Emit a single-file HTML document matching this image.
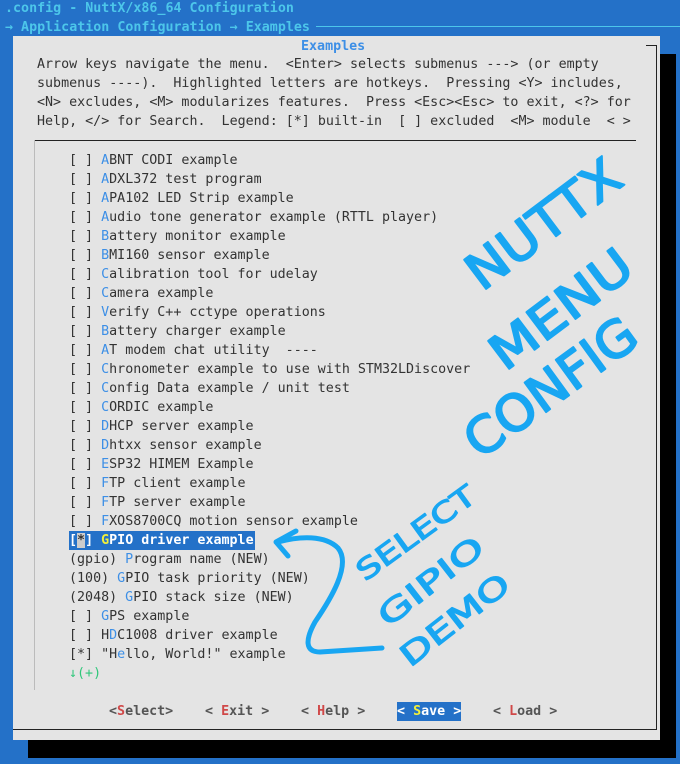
<!DOCTYPE html>
<html><head><meta charset="utf-8"><style>
*{margin:0;padding:0}
body{width:680px;height:764px;background:#2471c8;position:relative;overflow:hidden;font-family:"DejaVu Sans Mono","Liberation Mono",monospace;font-size:13.33px}
.r{position:absolute;white-space:pre;height:19px;line-height:19px;color:#333}
.h{color:#3d8fe6}
.t{color:#4cc6ea;font-weight:bold}
.k{color:#d04848}
.b{color:#555;font-weight:bold}
</style></head><body>
<div class="r t" style="left:5px;top:-1px">.config - NuttX/x86_64 Configuration</div>
<div class="r t" style="left:5px;top:18px">→ Application Configuration → Examples</div>
<div style="position:absolute;left:316px;top:26px;width:364px;height:1px;background:#4cc6ea"></div>
<div style="position:absolute;left:660px;top:54px;width:16px;height:704px;background:#000"></div>
<div style="position:absolute;left:28px;top:740px;width:648px;height:18px;background:#000"></div>
<div style="position:absolute;left:13px;top:36px;width:647px;height:704px;background:#e4e4e4"></div>
<div style="position:absolute;left:656px;top:45px;width:1px;height:685px;background:#222"></div>
<div style="position:absolute;left:13px;top:729px;width:644px;height:1px;background:#222"></div>
<div style="position:absolute;left:646px;top:45px;width:10px;height:1px;background:#222"></div>
<div style="position:absolute;left:34px;top:140px;width:602px;height:1px;background:#222"></div>
<div style="position:absolute;left:34px;top:140px;width:1px;height:550px;background:#bbb"></div>
<div class="r h" style="left:301px;top:37px;font-weight:bold">Examples</div>
<div class="r" style="left:37px;top:55px">Arrow keys navigate the menu.  &lt;Enter&gt; selects submenus ---&gt; (or empty</div>
<div class="r" style="left:37px;top:74px">submenus ----).  Highlighted letters are hotkeys.  Pressing &lt;Y&gt; includes,</div>
<div class="r" style="left:37px;top:93px">&lt;N&gt; excludes, &lt;M&gt; modularizes features.  Press &lt;Esc&gt;&lt;Esc&gt; to exit, &lt;?&gt; for</div>
<div class="r" style="left:37px;top:112px">Help, &lt;/&gt; for Search.  Legend: [*] built-in  [ ] excluded  &lt;M&gt; module  &lt; &gt;</div>

<div class="r" style="left:69px;top:151px">[ ] <span class="h">A</span>BNT CODI example</div>
<div class="r" style="left:69px;top:170px">[ ] <span class="h">A</span>DXL372 test program</div>
<div class="r" style="left:69px;top:189px">[ ] <span class="h">A</span>PA102 LED Strip example</div>
<div class="r" style="left:69px;top:208px">[ ] <span class="h">A</span>udio tone generator example (RTTL player)</div>
<div class="r" style="left:69px;top:227px">[ ] <span class="h">B</span>attery monitor example</div>
<div class="r" style="left:69px;top:246px">[ ] <span class="h">B</span>MI160 sensor example</div>
<div class="r" style="left:69px;top:265px">[ ] <span class="h">C</span>alibration tool for udelay</div>
<div class="r" style="left:69px;top:284px">[ ] <span class="h">C</span>amera example</div>
<div class="r" style="left:69px;top:303px">[ ] <span class="h">V</span>erify C++ cctype operations</div>
<div class="r" style="left:69px;top:322px">[ ] <span class="h">B</span>attery charger example</div>
<div class="r" style="left:69px;top:341px">[ ] <span class="h">A</span>T modem chat utility  ----</div>
<div class="r" style="left:69px;top:360px">[ ] <span class="h">C</span>hronometer example to use with STM32LDiscover</div>
<div class="r" style="left:69px;top:379px">[ ] <span class="h">C</span>onfig Data example / unit test</div>
<div class="r" style="left:69px;top:398px">[ ] <span class="h">C</span>ORDIC example</div>
<div class="r" style="left:69px;top:417px">[ ] <span class="h">D</span>HCP server example</div>
<div class="r" style="left:69px;top:436px">[ ] <span class="h">D</span>htxx sensor example</div>
<div class="r" style="left:69px;top:455px">[ ] <span class="h">E</span>SP32 HIMEM Example</div>
<div class="r" style="left:69px;top:474px">[ ] <span class="h">F</span>TP client example</div>
<div class="r" style="left:69px;top:493px">[ ] <span class="h">F</span>TP server example</div>
<div class="r" style="left:69px;top:512px">[ ] <span class="h">F</span>XOS8700CQ motion sensor example</div>
<div class="r" style="left:69px;top:531px;background:#2471c8;color:#fff;font-weight:bold;width:186px">[<span style="background:#ccc;color:#333">*</span>] <span style="color:#f2f03a">G</span>PIO driver example</div>
<div class="r" style="left:69px;top:550px">(gpio) <span class="h">P</span>rogram name (NEW)</div>
<div class="r" style="left:69px;top:569px">(100) <span class="h">G</span>PIO task priority (NEW)</div>
<div class="r" style="left:69px;top:588px">(2048) <span class="h">G</span>PIO stack size (NEW)</div>
<div class="r" style="left:69px;top:607px">[ ] <span class="h">G</span>PS example</div>
<div class="r" style="left:69px;top:626px">[ ] H<span class="h">D</span>C1008 driver example</div>
<div class="r" style="left:69px;top:645px">[*] "H<span class="h">e</span>llo, World!" example</div>
<div class="r" style="left:69px;top:664px;color:#2fc77a">↓(+)</div>

<div class="r b" style="left:109px;top:702px">&lt;<span class="k">S</span>elect&gt;</div>
<div class="r b" style="left:205px;top:702px">&lt; <span class="k">E</span>xit &gt;</div>
<div class="r b" style="left:301px;top:702px">&lt; <span class="k">H</span>elp &gt;</div>
<div class="r b" style="left:397px;top:702px;background:#2471c8;color:#fff">&lt; <span style="color:#f2f03a">S</span>ave &gt;</div>
<div class="r b" style="left:493px;top:702px">&lt; <span class="k">L</span>oad &gt;</div>

<svg style="position:absolute;left:0;top:0" width="680" height="764">
<g fill="#18a6f2" stroke="#18a6f2" stroke-width="2" stroke-linejoin="round" font-family="DejaVu Sans, sans-serif">
<text x="0" y="0" font-size="50" textLength="180" lengthAdjust="spacingAndGlyphs" transform="translate(482,292) rotate(-37)">NUTTX</text>
<text x="0" y="0" font-size="48" textLength="165" lengthAdjust="spacingAndGlyphs" transform="translate(505,372) rotate(-37)">MENU</text>
<text x="0" y="0" font-size="50" textLength="200" lengthAdjust="spacingAndGlyphs" transform="translate(480,460) rotate(-36)">CONFIG</text>
<text x="0" y="0" font-size="28" stroke-width="1.2" textLength="140" lengthAdjust="spacingAndGlyphs" transform="translate(365,582) rotate(-36)">SELECT</text>
<text x="0" y="0" font-size="30" stroke-width="1.2" textLength="125" lengthAdjust="spacingAndGlyphs" transform="translate(388,628) rotate(-38)">GIPIO</text>
<text x="0" y="0" font-size="30" stroke-width="1.2" textLength="130" lengthAdjust="spacingAndGlyphs" transform="translate(410,668) rotate(-38)">DEMO</text>
</g>
<g fill="none" stroke="#18a6f2" stroke-width="5" stroke-linecap="round" stroke-linejoin="round">
<path d="M278 542 C300 536 325 535 338 548 C352 565 330 600 315 622 C305 640 305 652 320 652 L382 648"/>
<path d="M296 531 L276 542 L288 556"/>
</g>
</svg>
</body></html>
